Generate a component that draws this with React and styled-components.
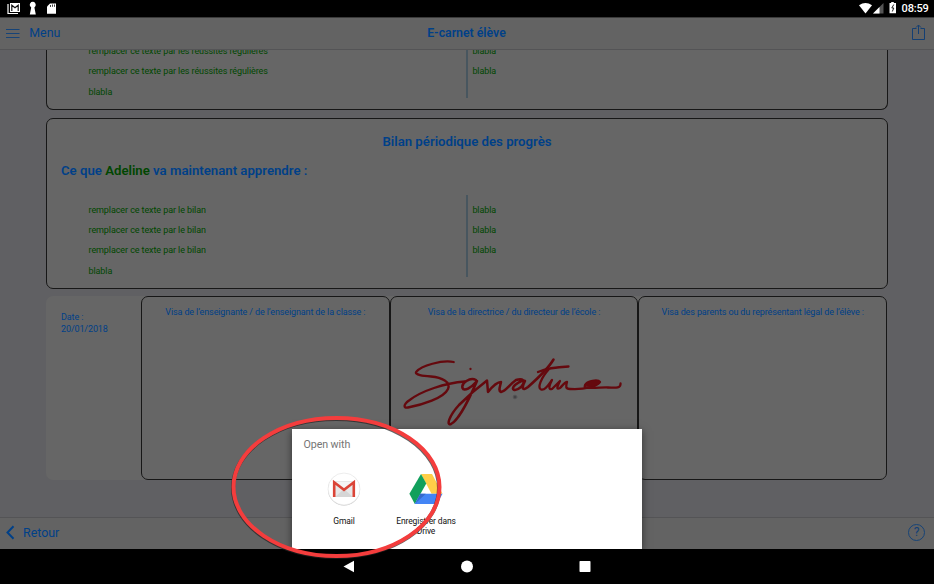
import React from "react";
import styled, { createGlobalStyle } from "styled-components";

const Global = createGlobalStyle`
  * { box-sizing: border-box; }
  body { margin: 0; background: #000; font-family: Roboto, sans-serif; }
  svg { display: block; flex: none; }
`;

const BLUE = "#004088";
const GREEN = "#004600";

const Screen = styled.div`
  position: relative;
  width: 934px;
  height: 584px;
  overflow: hidden;
  display: flex;
  flex-direction: column;
  background: #606063;
`;

const StatusBar = styled.header`
  height: 17px;
  flex: none;
  background: #000;
  color: #fff;
  display: flex;
  justify-content: space-between;
  padding: 0 5.5px 0 7px;
`;

const Clock = styled.span`
  font-size: 11px;
  line-height: 18px;
  font-weight: 500;
  letter-spacing: -0.2px;
`;

const StatusGroup = styled.div`
  display: flex;
  align-items: flex-start;
`;

const NavBar = styled.nav`
  height: 33px;
  flex: none;
  display: grid;
  grid-template-columns: 1fr auto 1fr;
  align-items: center;
  background: #636363;
  border-top: 1px solid #3b3b3b;
  border-bottom: 1px solid #545456;
  padding: 0 8px 2px 6px;
  color: ${BLUE};
`;

const NavTitle = styled.h1`
  margin: 0;
  padding-left: 1px;
  font-size: 12.3px;
  font-weight: 600;
`;

const BarLink = styled.a`
  display: flex;
  align-items: center;
  gap: ${(p) => p.$gap}px;
  font-size: 12.4px;
  color: ${BLUE};
`;

const NavEnd = styled.div`
  justify-self: end;
`;

const Content = styled.main`
  height: 467px;
  flex: none;
  overflow: hidden;
  padding: 0 46px;
  display: flex;
  flex-direction: column;
  gap: 8px;
`;

const Card = styled.section`
  flex: none;
  height: ${(p) => p.$height}px;
  border: 1px solid #171717;
  border-top-width: ${(p) => (p.$cut ? 0 : 1)}px;
  border-radius: ${(p) => (p.$cut ? "0 0 7px 7px" : "7px")};
  background: #666;
  color: ${BLUE};
  padding: 0 14px;
`;

const CardTitle = styled.h2`
  margin: 0;
  padding-top: 14px;
  font-size: 13.2px;
  line-height: 18px;
  font-weight: 600;
  text-align: center;
`;

const CardSubtitle = styled.h3`
  margin: 11px 0 15px;
  font-size: 13.2px;
  line-height: 18px;
  font-weight: 600;
`;

const Name = styled.span`
  color: ${GREEN};
`;

const Columns = styled.div`
  display: grid;
  grid-template-columns: 405px 1fr;
  grid-template-rows: ${(p) => p.$height}px;
`;

const List = styled.ul`
  list-style: none;
  margin: 0;
  height: 100%;
  padding: 0 0 0 ${(p) => (p.$divided ? 4.4 : 27.5)}px;
  border-left: ${(p) => (p.$divided ? "2px solid #48565f" : "0")};
  color: ${GREEN};
  font-size: 9px;
  letter-spacing: -0.09px;
  line-height: 20.4px;

  li:first-child {
    margin-top: ${(p) => p.$offset}px;
  }
`;

const VisaRow = styled.section`
  display: grid;
  grid-template-columns: 95px repeat(3, 1fr);
  width: 841px;
  height: 184px;
  flex: none;
  margin-top: -1px;
  border-radius: 7px;
  background: #666;
  color: ${BLUE};
  font-size: 9px;
  letter-spacing: -0.12px;
  line-height: 12px;
`;

const DateCell = styled.div`
  padding: 14.5px 15px;
`;

const VisaCell = styled.div`
  border: 1px solid #171717;
  border-radius: 7px;
  text-align: center;
  padding-top: 8.5px;
`;

const Signature = styled.svg`
  margin: 38px 0 0 8px;
`;

const Toolbar = styled.footer`
  height: 32px;
  flex: none;
  display: flex;
  align-items: center;
  justify-content: space-between;
  background: #636363;
  border-top: 1px solid #545456;
  padding: 0 9px 2px 5.5px;
`;

const HelpIcon = styled.span`
  width: 17px;
  height: 17px;
  border: 1px solid #164377;
  border-radius: 50%;
  color: #123f77;
  font-size: 12px;
  line-height: 15px;
  text-align: center;
`;

const SystemNav = styled.footer`
  height: 35px;
  flex: none;
  background: #000;
  display: flex;
  justify-content: center;
  gap: 106px;
  padding-top: 11px;
`;

const Sheet = styled.div`
  position: absolute;
  left: 292px;
  top: 429px;
  width: 350px;
  height: 120px;
  background: #fff;
  box-shadow: 0 2px 8px rgba(0, 0, 0, 0.5);
  clip-path: inset(-12px -12px 0 -12px);
  padding: 8px 11px;
`;

const SheetTitle = styled.div`
  font-size: 10.7px;
  line-height: 16px;
  letter-spacing: -0.1px;
  padding-left: 0.5px;
  color: #757575;
`;

const AppGrid = styled.div`
  display: grid;
  grid-template-columns: 82px 82px;
  margin-top: 19px;
`;

const AppItem = styled.div`
  display: flex;
  flex-direction: column;
  align-items: center;
  text-align: center;
  font-size: 8.5px;
  letter-spacing: -0.14px;
  line-height: 10px;
  color: #111;
  gap: 10px;
`;

const Highlight = styled.svg`
  position: absolute;
  left: 228px;
  top: 412px;
`;

function GmailIcon() {
  return (
    <svg width="34" height="34" viewBox="0 0 34 34">
      <circle cx="17" cy="17.4" r="16" fill="#bbb" />
      <circle cx="17" cy="17" r="16" fill="#fff" stroke="#e2e2e2" strokeWidth=".6" />
      <path d="M6.500 9h21v16h-21z" fill="#e7e7e7" />
      <path d="M8 10l9 8 9-8z" fill="#f5f5f5" />
      <path d="M8 25l9-8 9 8z" fill="#d6d6d6" />
      <path d="M7.200 25V10.300L17 17.800l9.800-7.500V25" fill="none" stroke="#db4437" strokeWidth="2.600" />
    </svg>
  );
}

function DriveIcon() {
  return (
    <svg width="34" height="34" viewBox="0 0 34 34">
      <path d="M12 2h11l10.500 19.800h-11z" fill="#ffcf48" />
      <path d="M12 2L.4 21.800 5.800 32 17.300 11.600z" fill="#11a05c" />
      <path d="M11.300 21.800h22.200L28 32H5.800z" fill="#4385f5" />
      <path d="M11.300 21.800L5.800 32l11-10.200z" fill="#3669cc" />
    </svg>
  );
}

function SignatureDrawing() {
  return (
    <Signature width="230" height="76" viewBox="399 356 230 76" fill="none" stroke="#65090e" strokeLinecap="round" strokeLinejoin="round">
      <path strokeWidth="2.300" d="M453.700 362C442 359.500 421 366 416.500 371.500C413.500 375 424 376 431 376.500C442 377.500 451 382 448 389C444 398 422 405 408 407.500C403 408.500 403.500 404.500 409 400.500C421 391 445 383 465 381.500" />
      <path strokeWidth="2.500" d="M476 380C470 377 461 383 462.500 388C464 392 471 388 477 381C471 395 459 420 451 424C446 426 449 416 459 405C468 396 477 388 487 380.500L488 392C492 387 497 382 501 382C500 387 498 391 501 392C506 391 509 385 516 380C522 378 527 380 521 387C515 392 510 390 515 385C520 381 524 380 525 381C521 389 523 391 528 387C537 379 548 369 553.500 359.500" />
      <path strokeWidth="2.300" d="M538 372C545 369 556 367 568.500 366.500M549 369C541 378 537 388 541 389.500C545 391 549 384 552 380C549 386 548 390 552 389L560 381C557 387 556 390 560 388C563 385 565 382 567 382C566 386 565 389 570 389C585 390 597 386 600 382C598 379 587 381 585 385C582 390 601 387 608 387.500C617 388 621 388 620.500 383.500" />
      <path d="M585 385C587 381 596 379 600 382C597 387 589 388 585 385Z" fill="#65090e" strokeWidth="1" />
      <circle cx="470.500" cy="369" r=".5" strokeWidth="1.300" />
      <circle cx="515" cy="397" r="1.800" fill="#434345" stroke="#535355" strokeWidth="1" />
    </Signature>
  );
}

function Rows({ items, divided, offset = 4.6 }) {
  return (
    <List $divided={divided} $offset={offset}>
      {items.map((text, i) => <li key={i}>{text}</li>)}
    </List>
  );
}

export default function App() {
  return (
    <>
      <Global />
      <Screen>
        <StatusBar>
          <StatusGroup>
            <svg width="52" height="17" viewBox="0 0 52 17">
              <path d="M1 4v9.500h10" fill="none" stroke="#fff" strokeWidth="1.200" />
              <path d="M3 3h10v9H3z" fill="#fff" />
              <path d="M4.800 11V5.200L8 7.800l3.200-2.600V11" fill="none" stroke="#111" strokeWidth="1.200" />
              <path d="M23 6a3 3 0 1 1 5.500 0l-1.100 1.500 1.400 7h-6l1.400-7z" fill="#fff" />
              <path d="M43 3.500h6v10.200h-9V6.500z" fill="#fff" />
              <path d="M43.500 5v2M45.500 4.500v2.300M47.500 4.500v2.300" stroke="#111" strokeWidth=".8" />
            </svg>
          </StatusGroup>
          <StatusGroup>
            <svg width="43" height="17" viewBox="0 0 43 17">
              <path d="M0 5.200Q6.500.8 13 5.200L6.500 13.500z" fill="#fff" />
              <path d="M14 13.500L24.500 3v10.500z" fill="#555" />
              <path d="M14 13.500L20.500 7v6.500z" fill="#fff" />
              <path d="M30.500 3h1.700V2h2.600v1H37v10.200h-6.500z" fill="#fff" />
              <path d="M34.800 4.500L32.800 8h2l-1.500 3.500" fill="none" stroke="#222" />
            </svg>
            <Clock>08:59</Clock>
          </StatusGroup>
        </StatusBar>

        <NavBar>
          <BarLink $gap={9.8}>
            <svg width="13.500" height="10" viewBox="0 0 13.500 10">
              <path d="M0 1.500h13.500M0 5.500h13.500M0 9.500h13.500" stroke="#164377" />
            </svg>
            Menu
          </BarLink>
          <NavTitle>E-carnet élève</NavTitle>
          <NavEnd>
            <svg width="15" height="17" viewBox="0 0 15 17" fill="none" stroke="#143f73">
              <path d="M5.500 4.500h-4v11h12v-11h-4M7.500 10V1.200M5 3.500L7.500 1l2.500 2.500" />
            </svg>
          </NavEnd>
        </NavBar>

        <Content>
          <Card $height={60} $cut>
            <Columns $height={48}>
              <Rows offset={-9.2} items={["remplacer ce texte par les réussites régulières", "remplacer ce texte par les réussites régulières", "blabla"]} />
              <Rows divided offset={-9.2} items={["blabla", "blabla"]} />
            </Columns>
          </Card>

          <Card $height={171}>
            <CardTitle>Bilan périodique des progrès</CardTitle>
            <CardSubtitle>Ce que <Name>Adeline</Name> va maintenant apprendre :</CardSubtitle>
            <Columns $height={82}>
              <Rows items={["remplacer ce texte par le bilan", "remplacer ce texte par le bilan", "remplacer ce texte par le bilan", "blabla"]} />
              <Rows divided items={["blabla", "blabla", "blabla"]} />
            </Columns>
          </Card>

          <VisaRow>
            <DateCell>Date :<br />20/01/2018</DateCell>
            <VisaCell>Visa de l’enseignante / de l’enseignant de la classe :</VisaCell>
            <VisaCell>
              Visa de la directrice / du directeur de l’école :
              <SignatureDrawing />
            </VisaCell>
            <VisaCell>Visa des parents ou du représentant légal de l’élève :</VisaCell>
          </VisaRow>
        </Content>

        <Toolbar>
          <BarLink $gap={8.5}>
            <svg width="9" height="15" viewBox="0 0 9 15">
              <path d="M7.500 1.300L1.500 7.500l6 6.200" fill="none" stroke={BLUE} strokeWidth="2" />
            </svg>
            Retour
          </BarLink>
          <HelpIcon>?</HelpIcon>
        </Toolbar>

        <SystemNav>
          <svg width="12" height="13" viewBox="0 0 12 13"><path d="M.5 6.500L11 .8v11.400z" fill="#fff" /></svg>
          <svg width="12" height="13" viewBox="0 0 12 13"><circle cx="6" cy="6.500" r="6" fill="#fff" /></svg>
          <svg width="12" height="13" viewBox="0 0 12 13"><rect x=".5" y="1" width="11" height="11" rx=".7" fill="#fff" /></svg>
        </SystemNav>

        <Sheet>
          <SheetTitle>Open with</SheetTitle>
          <AppGrid>
            <AppItem><GmailIcon />Gmail</AppItem>
            <AppItem><DriveIcon /><span>Enregistrer dans<br />Drive</span></AppItem>
          </AppGrid>
        </Sheet>

        <Highlight width="218" height="150" viewBox="228 412 218 150" fill="none">
          <ellipse cx="336" cy="488" rx="103" ry="69" stroke="#222" strokeOpacity=".7" strokeWidth="4" />
          <ellipse cx="336.500" cy="487" rx="103" ry="69" stroke="#f43d3d" strokeWidth="4" />
        </Highlight>
      </Screen>
    </>
  );
}
